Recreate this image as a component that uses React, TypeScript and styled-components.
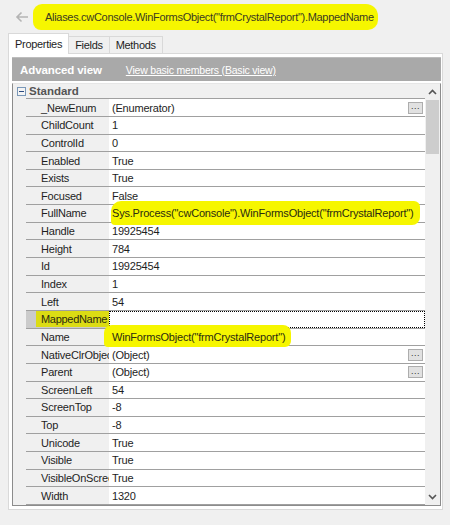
import React from "react";
import styled, { createGlobalStyle } from "styled-components";

const Global = createGlobalStyle`
  html, body { margin: 0; padding: 0; background: #f0f0f0; }
  body { font-family: "Liberation Sans", Arial, sans-serif; font-size: 11px; color: #1e1e1e; letter-spacing: -0.2px; }
  * { box-sizing: border-box; }
`;

const Page = styled.div`
  width: 450px;
  height: 525px;
  display: flex;
  flex-direction: column;
  overflow: hidden;
`;

const TopBar = styled.div`
  height: 33px;
  display: flex;
  align-items: center;
  padding-left: 15px;
  gap: 4px;
`;

const BackIcon = styled.svg`
  width: 14px;
  height: 12px;
  flex: none;
`;

const PathHighlight = styled.span`
  background: #f6f600;
  border-radius: 9px 12px 10px 8px;
  padding: 7px 4px 7px 12px;
  font-size: 11px;
  color: #3a3a20;
  letter-spacing: -0.3px;
`;

const TabStrip = styled.div`
  display: flex;
  align-items: flex-end;
  height: 20px;
  margin-left: 8px;
`;

const Tab = styled.div<{ $active?: boolean }>`
  height: ${(p) => (p.$active ? "21px" : "17px")};
  padding: 0 6px;
  display: flex;
  align-items: center;
  border: 1px solid #d9d9d9;
  border-bottom: none;
  margin-left: ${(p) => (p.$active ? "0" : "-1px")};
  background: ${(p) => (p.$active ? "#ffffff" : "#f0f0f0")};
  font-size: 11px;
  letter-spacing: -0.3px;
  color: #1e1e1e;
  position: relative;
  z-index: ${(p) => (p.$active ? 1 : 0)};
  margin-bottom: ${(p) => (p.$active ? "-1px" : "0")};
`;

const Panel = styled.div`
  margin: 0 7px 0 8px;
  height: 457px;
  border: 1px solid #d9d9d9;
  background: #ffffff;
  padding: 3px 1px 3px 3px;
  display: flex;
  flex-direction: column;
`;

const Header = styled.div`
  height: 24px;
  background: #a9a9a9;
  border-top: 1px solid #bdbdbd;
  display: flex;
  align-items: center;
  padding-left: 8px;
  gap: 24px;
  color: #ffffff;
  flex: none;
`;

const HeaderTitle = styled.span`
  font-weight: bold;
  font-size: 11.5px;
  letter-spacing: -0.1px;
`;

const HeaderLink = styled.span`
  text-decoration: underline;
  font-size: 10.5px;
  letter-spacing: -0.2px;
`;

const Grid = styled.div`
  margin-top: 2px;
  flex: 1;
  border: 1px solid #8c8c8c;
  border-top-color: #e6e6e6;
  display: flex;
  min-height: 0;
  background: #f0f0f0;
`;

const RowList = styled.div`
  flex: 1;
  display: flex;
  flex-direction: column;
  overflow: hidden;
`;

const CategoryRow = styled.div`
  height: 17px;
  display: flex;
  align-items: center;
  background: #f0f0f0;
  position: relative;
`;

const CategoryBody = styled.div`
  flex: 1;
  height: 100%;
  display: flex;
  align-items: center;
  border-bottom: 1px solid #a0a0a0;
  font-weight: bold;
  color: #555555;
  font-size: 11.5px;
  letter-spacing: 0;
`;

const Gutter = styled.div`
  width: 13px;
  flex: none;
  height: 100%;
  display: flex;
  align-items: center;
  justify-content: center;
  background: #f0f0f0;
`;

const MinusBox = styled.div`
  width: 9px;
  height: 9px;
  border: 1px solid #7a98b8;
  background: #f4f4f4;
  position: relative;
  margin-left: 3px;
  &::after {
    content: "";
    position: absolute;
    left: 1px;
    right: 1px;
    top: 3px;
    height: 1px;
    background: #2a4a80;
  }
`;

const CategoryLabel = styled.span`
  margin-left: 3px;
`;

const Row = styled.div`
  height: 17.65px;
  display: flex;
  flex: none;
`;

const Cells = styled.div`
  flex: 1;
  display: flex;
  border-bottom: 1px solid #a0a0a0;
`;

const NameCell = styled.div<{ $selected?: boolean }>`
  width: 83px;
  flex: none;
  background: ${(p) => (p.$selected ? "#cbcbcb" : "#f0f0f0")};
  padding-left: ${(p) => (p.$selected ? "10px" : "15px")};
  display: flex;
  align-items: center;
  white-space: nowrap;
  overflow: hidden;
  color: #1e1e1e;
`;

const NameHighlight = styled.span`
  background: #dcdc14;
  padding: 1px 0 1px 5px;
  flex: 1;
  height: 16px;
  display: flex;
  align-items: center;
  color: #2b2b10;
  letter-spacing: -0.3px;
`;

const ValueCell = styled.div<{ $focused?: boolean }>`
  flex: 1;
  background: #ffffff;
  display: flex;
  align-items: center;
  padding-left: 3px;
  padding-right: 2px;
  white-space: nowrap;
  border: ${(p) => (p.$focused ? "1px dotted #000" : "none")};
  position: relative;
  min-width: 0;
`;

const ValueText = styled.span`
  flex: 1;
`;

const ValueHighlight = styled.span<{ $pad: string; $radius: string }>`
  background: #f6f600;
  padding: ${(p) => p.$pad};
  margin: ${(p) => p.$pad
    .split(" ")
    .map((v) => (v === "0" ? "0" : "-" + v))
    .join(" ")};
  border-radius: ${(p) => p.$radius};
  position: relative;
  z-index: 2;
  color: #2b2b10;
`;

const EllipsisButton = styled.div`
  width: 15px;
  height: 12px;
  border: 1px solid #adadad;
  background: #e1e1e1;
  font-size: 9px;
  line-height: 6px;
  display: flex;
  align-items: center;
  justify-content: center;
  color: #333;
  flex: none;
  padding-bottom: 3px;
  letter-spacing: 0.5px;
`;

const ScrollBar = styled.div`
  width: 15px;
  flex: none;
  background: #f0f0f0;
  display: flex;
  flex-direction: column;
  align-items: center;
`;

const ScrollArrow = styled.div`
  height: 16px;
  width: 100%;
  display: flex;
  align-items: center;
  justify-content: center;
`;

const Thumb = styled.div`
  width: 13px;
  height: 54px;
  background: #cdcdcd;
`;

const Track = styled.div`
  flex: 1;
`;

type Prop = {
  name: string;
  value: string;
  ellipsis?: boolean;
  hl?: { pad: string; radius: string };
  selected?: boolean;
};

const props: Prop[] = [
  { name: "_NewEnum", value: "(Enumerator)", ellipsis: true },
  { name: "ChildCount", value: "1" },
  { name: "ControlId", value: "0" },
  { name: "Enabled", value: "True" },
  { name: "Exists", value: "True" },
  { name: "Focused", value: "False" },
  {
    name: "FullName",
    value: 'Sys.Process("cwConsole").WinFormsObject("frmCrystalReport")',
    hl: { pad: "6px 7px 6px 1px", radius: "10px 6px 8px 4px" },
  },
  { name: "Handle", value: "19925454" },
  { name: "Height", value: "784" },
  { name: "Id", value: "19925454" },
  { name: "Index", value: "1" },
  { name: "Left", value: "54" },
  { name: "MappedName", value: "", selected: true },
  {
    name: "Name",
    value: 'WinFormsObject("frmCrystalReport")',
    hl: { pad: "6px 6px 4px 8px", radius: "8px 8px 6px 4px" },
  },
  { name: "NativeClrObject", value: "(Object)", ellipsis: true },
  { name: "Parent", value: "(Object)", ellipsis: true },
  { name: "ScreenLeft", value: "54" },
  { name: "ScreenTop", value: "-8" },
  { name: "Top", value: "-8" },
  { name: "Unicode", value: "True" },
  { name: "Visible", value: "True" },
  { name: "VisibleOnScreen", value: "True" },
  { name: "Width", value: "1320" },
];

export default function App() {
  return (
    <Page>
      <Global />
      <TopBar>
        <BackIcon viewBox="0 0 14 12">
          <path d="M13 6H2M6.5 1.5L2 6l4.5 4.5" fill="none" stroke="#b4b4b4" strokeWidth="1.6" />
        </BackIcon>
        <PathHighlight>Aliases.cwConsole.WinFormsObject("frmCrystalReport").MappedName</PathHighlight>
      </TopBar>
      <TabStrip>
        <Tab $active>Properties</Tab>
        <Tab>Fields</Tab>
        <Tab>Methods</Tab>
      </TabStrip>
      <Panel>
        <Header>
          <HeaderTitle>Advanced view</HeaderTitle>
          <HeaderLink>View basic members (Basic view)</HeaderLink>
        </Header>
        <Grid>
          <RowList>
            <CategoryRow>
              <Gutter>
                <MinusBox />
              </Gutter>
              <CategoryBody>
                <CategoryLabel>Standard</CategoryLabel>
              </CategoryBody>
            </CategoryRow>
            {props.map((p) => (
              <Row key={p.name}>
                <Gutter />
                <Cells>
                  <NameCell $selected={p.selected}>
                    {p.selected ? <NameHighlight>{p.name}</NameHighlight> : p.name}
                  </NameCell>
                  <ValueCell $focused={p.selected}>
                    <ValueText>
                      {p.hl ? (
                        <ValueHighlight $pad={p.hl.pad} $radius={p.hl.radius}>
                          {p.value}
                        </ValueHighlight>
                      ) : (
                        p.value
                      )}
                    </ValueText>
                    {p.ellipsis && <EllipsisButton>...</EllipsisButton>}
                  </ValueCell>
                </Cells>
              </Row>
            ))}
          </RowList>
          <ScrollBar>
            <ScrollArrow>
              <svg width="9" height="6" viewBox="0 0 9 6">
                <path d="M1 5l3.5-3.5L8 5" fill="none" stroke="#555" strokeWidth="1.6" />
              </svg>
            </ScrollArrow>
            <Thumb />
            <Track />
            <ScrollArrow>
              <svg width="9" height="6" viewBox="0 0 9 6">
                <path d="M1 1l3.5 3.5L8 1" fill="none" stroke="#555" strokeWidth="1.6" />
              </svg>
            </ScrollArrow>
          </ScrollBar>
        </Grid>
      </Panel>
    </Page>
  );
}
